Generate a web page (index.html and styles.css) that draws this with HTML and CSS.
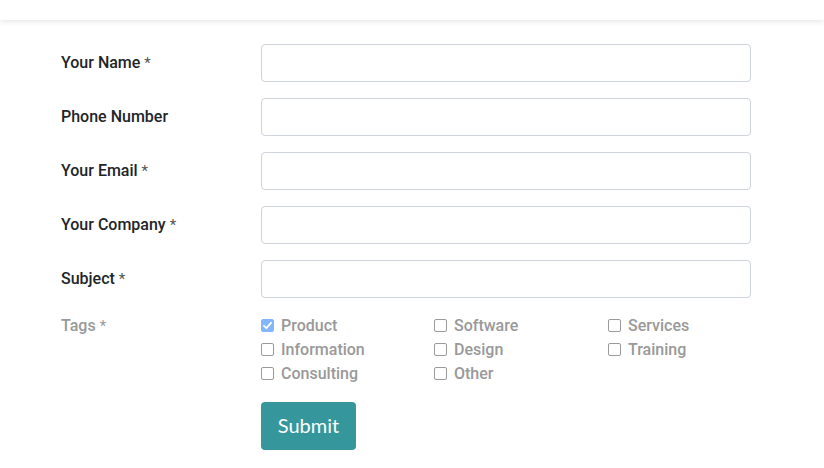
FILE: index.html
```html
<!DOCTYPE html>
<html>
<head>
<meta charset="utf-8">
<link rel="stylesheet" href="styles.css">
</head>
<body>
<header class="topbar"></header>
<form class="form">
  <div class="row">
    <label class="lbl">Your Name <span class="req">*</span></label>
    <input class="field" type="text">
  </div>
  <div class="row">
    <label class="lbl">Phone Number</label>
    <input class="field" type="text">
  </div>
  <div class="row">
    <label class="lbl">Your Email <span class="req">*</span></label>
    <input class="field" type="text">
  </div>
  <div class="row">
    <label class="lbl">Your Company <span class="req">*</span></label>
    <input class="field" type="text">
  </div>
  <div class="row">
    <label class="lbl">Subject <span class="req">*</span></label>
    <input class="field" type="text">
  </div>
  <div class="row tags-row">
    <div class="lbl muted">Tags <span class="req">*</span></div>
    <div class="tags">
      <div class="opt"><span class="box checked"><svg viewBox="0 0 13 13" width="13" height="13"><path d="M3 6.8 L5.4 9.2 L10 3.8" fill="none" stroke="#fff" stroke-width="1.8" stroke-linecap="round" stroke-linejoin="round"/></svg></span>Product</div>
      <div class="opt"><span class="box"></span>Software</div>
      <div class="opt"><span class="box"></span>Services</div>
      <div class="opt"><span class="box"></span>Information</div>
      <div class="opt"><span class="box"></span>Design</div>
      <div class="opt"><span class="box"></span>Training</div>
      <div class="opt"><span class="box"></span>Consulting</div>
      <div class="opt"><span class="box"></span>Other</div>
    </div>
  </div>
  <div class="row submit-row">
    <div class="lbl"></div>
    <button type="button" class="btn">Submit</button>
  </div>
</form>
</body>
</html>
```

FILE: styles.css
```css
html, body {
  margin: 0;
  padding: 0;
  background: #fff;
}
body {
  font-family: Roboto, "Liberation Sans", sans-serif;
  color: #212529;
}
.topbar {
  height: 20px;
  background: #fff;
  box-shadow: 0 1px 6px rgba(0,0,0,0.12);
  position: relative;
}
.form {
  padding: 24px 0 0 61px;
  display: flex;
  flex-direction: column;
  gap: 16px;
}
.row {
  display: flex;
  align-items: center;
}
.lbl {
  width: 200px;
  flex: none;
  font-size: 16px;
  font-weight: 500;
  color: #212529;
  padding-bottom: 2px;
}
.req {
  font-weight: 400;
  color: #555;
  font-size: 15px;
}
.muted, .muted .req {
  color: #999;
}
.field {
  width: 490px;
  height: 38px;
  box-sizing: border-box;
  border: 1px solid #ced4da;
  border-radius: 4px;
  margin: 0;
  padding: 0 12px;
  font: inherit;
  background: #fff;
}
.tags-row {
  align-items: flex-start;
}
.tags-row .lbl {
  line-height: 24px;
  padding-bottom: 0;
}
.tags {
  display: grid;
  grid-template-columns: 173px 174px 150px;
  margin-top: -1px;
}
.opt {
  display: flex;
  align-items: center;
  height: 24px;
  font-size: 16px;
  font-weight: 500;
  color: #999;
}
.box {
  width: 13px;
  height: 13px;
  box-sizing: border-box;
  border: 1px solid #9a9a9a;
  border-radius: 2px;
  margin: 0 7px 0 0;
  flex: none;
  display: inline-flex;
}
.box.checked {
  background: #83b6fb;
  border-color: #83b6fb;
}
.box.checked svg {
  margin: -1px;
}
.submit-row {
  margin-top: 1px;
}
.submit-row .lbl {
  padding-bottom: 0;
}
.btn {
  width: 95px;
  height: 48px;
  background: #35979c;
  color: #fff;
  border: none;
  border-radius: 4px;
  font-family: Lato, "Open Sans", sans-serif;
  font-size: 20px;
  padding: 0 0 2px;
}
```
